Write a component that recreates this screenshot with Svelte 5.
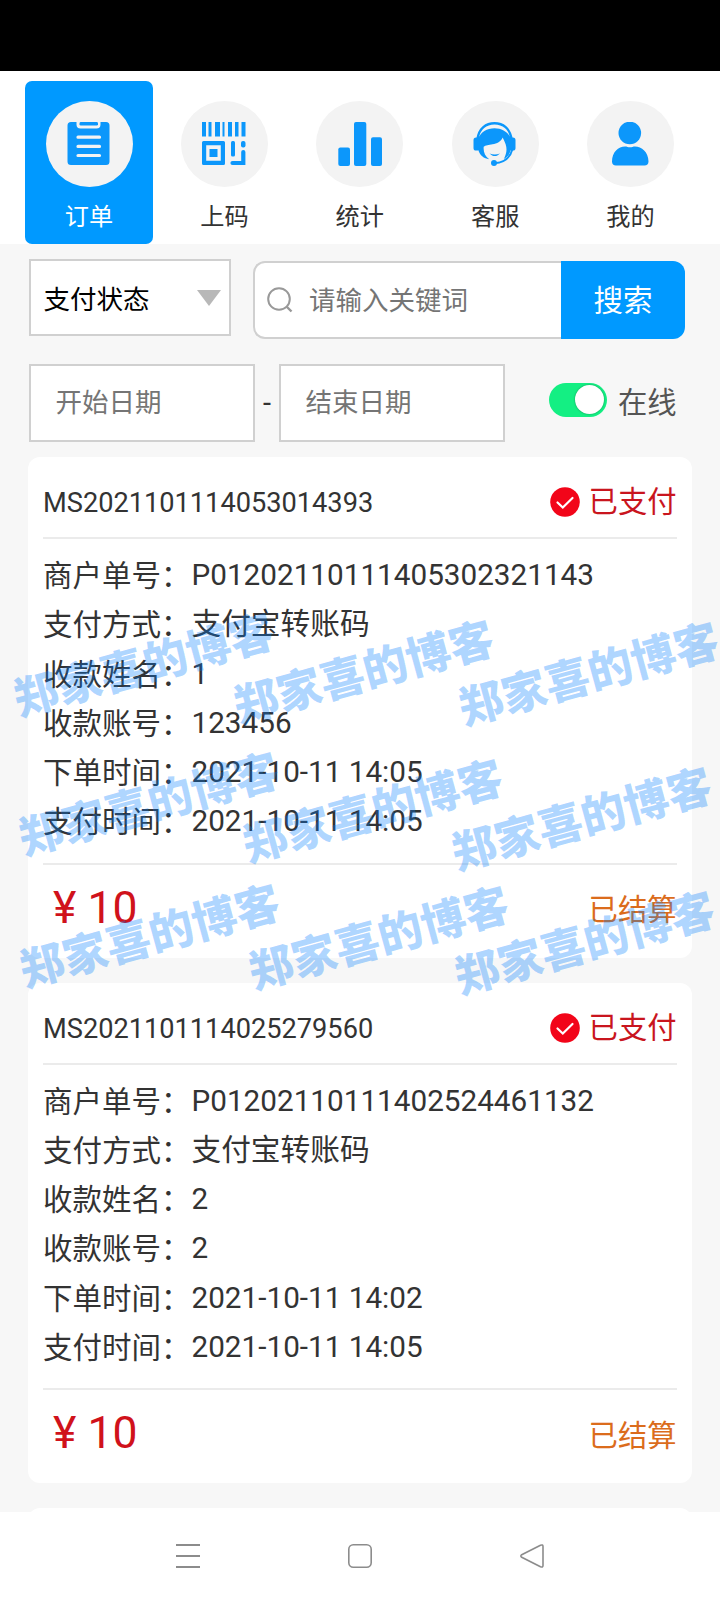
<script lang="ts">
	interface Order {
		id: string;
		rows: [string, string][];
		amount: number;
	}

	const tabs = [
		{ icon: 'order', label: '订单' },
		{ icon: 'code', label: '上码' },
		{ icon: 'stats', label: '统计' },
		{ icon: 'service', label: '客服' },
		{ icon: 'mine', label: '我的' }
	];

	const orders: Order[] = [
		{
			id: 'MS2021101114053014393',
			rows: [
				['商户单号', 'P01202110111405302321143'],
				['支付方式', '支付宝转账码'],
				['收款姓名', '1'],
				['收款账号', '123456'],
				['下单时间', '2021-10-11 14:05'],
				['支付时间', '2021-10-11 14:05']
			],
			amount: 10
		},
		{
			id: 'MS2021101114025279560',
			rows: [
				['商户单号', 'P01202110111402524461132'],
				['支付方式', '支付宝转账码'],
				['收款姓名', '2'],
				['收款账号', '2'],
				['下单时间', '2021-10-11 14:02'],
				['支付时间', '2021-10-11 14:05']
			],
			amount: 10
		}
	];

	// centre points of the watermark stamps
	const marks = [
		[143, 663], [363, 670], [588, 672],
		[148, 802], [372, 809], [581, 817],
		[149, 934], [378, 936], [584, 941]
	];

	let active = $state('order');
	let online = $state(true);
</script>

<div class="app">
	<div class="status-bar"></div>

	<nav class="tabs">
		{#each tabs as tab}
			<button class="tab" class:active={active === tab.icon} onclick={() => (active = tab.icon)}>
				<span class="tab-icon">
					<svg viewBox="0 0 44 44" width="44" height="44" fill="#0c97fb">
						{#if tab.icon === 'order'}
							<path d="M4 0h5.500v2.500a4 4 0 0 0 4 4h16a4 4 0 0 0 4-4V0h5.500a3.500 3.500 0 0 1 3.500 3.500v36a3.500 3.500 0 0 1-3.500 3.500H4a3.500 3.500 0 0 1-3.500-3.500v-36A3.500 3.500 0 0 1 4 0z" />
							<rect x="12.500" y="0" width="18.500" height="3.600" rx="1.400" />
							<path d="M11 15.200h21.500M11 24.400h21.500M11 33.500h21.500" stroke="#f3f3f3" stroke-width="3.200" stroke-linecap="round" />
						{:else if tab.icon === 'code'}
							<path d="M0 0h4v14.500H0zM6.500 0h3v14.500h-3zM13 0h5v14.500h-5zM20.500 0h2v14.500h-2zM26 0h4v14.500h-4zM33 0h3.500v14.500H33zM39.500 0h4v14.500h-4z" />
							<path fill-rule="evenodd" d="M1.500 19h20a1.500 1.500 0 0 1 1.500 1.500v21a1.500 1.500 0 0 1-1.500 1.500h-20A1.500 1.500 0 0 1 0 41.500v-21A1.500 1.500 0 0 1 1.500 19zM4.200 23.200v15.600h14.600V23.200z" />
							<rect x="7.500" y="27" width="8" height="8" />
							<rect x="29" y="19" width="4" height="15.500" rx="1.500" />
							<rect x="39" y="19" width="4.500" height="6.500" rx="2" />
							<path d="M41.300 30v11H30.500" fill="none" stroke="#0c97fb" stroke-width="4.200" stroke-linecap="round" />
						{:else if tab.icon === 'stats'}
							<rect x="0.300" y="25.500" width="11.700" height="18.500" rx="2" />
							<rect x="16" y="0" width="12.300" height="44" rx="2" />
							<rect x="33" y="15.300" width="11" height="28.700" rx="2" />
						{:else if tab.icon === 'service'}
							<path d="M4.500 17C6 6.500 13 1.300 21.500 1.300S37 6.500 38.500 17" fill="none" stroke="#0c97fb" stroke-width="2.400" />
							<path d="M5 17C7.500 10 14 6.200 21.500 6.200S35.500 10 38 17v10c-1.200 5-3.400 7.800-7.200 10 2.800-5.500 3.400-9.500 1.900-14.500-.7-2.600-2-4.500-3-7-1.800 4.200-5.700 6.200-10.200 6.800-3.800.6-7 .9-8.800 2.500-.5 5 1.200 9.200 5.500 12.400C11 36.500 6.600 33.500 5 27z" />
							<rect x="0.500" y="15.500" width="6" height="13" rx="2.600" />
							<rect x="36.500" y="15.500" width="6" height="13" rx="2.600" />
							<path d="M16.500 31.500c3.500 3.400 7 3.400 10.500 0-3.500 1.400-7 1.400-10.500 0z" />
							<path d="M39.500 27C37 36.500 31 40.500 21.500 41.200" fill="none" stroke="#0c97fb" stroke-width="2" />
							<circle cx="21" cy="41" r="3" />
						{:else}
							<circle cx="20.800" cy="11" r="11.300" />
							<path d="M3 39.500C3 30 9.500 24.500 16 24.500c2 0 3 .8 5 .8s3-.8 5-.8c6.500 0 13.500 5.500 13.500 15 0 2.500-1.500 4-4 4H7c-2.500 0-4-1.500-4-4z" />
						{/if}
					</svg>
				</span>
				<span class="tab-label">{tab.label}</span>
			</button>
		{/each}
	</nav>

	<div class="filters">
		<div class="select">
			<span>支付状态</span>
			<svg width="24" height="16" viewBox="0 0 24 16"><path d="M0 0h24L12 16z" fill="#b8b8b8" /></svg>
		</div>
		<div class="search">
			<div class="search-input">
				<svg width="26" height="26" viewBox="0 0 26 26" fill="none" stroke="#999" stroke-width="2">
					<circle cx="12" cy="12" r="10.800" />
					<path d="M19.500 19.500l5 5" stroke-width="2.400" />
				</svg>
				<span>请输入关键词</span>
			</div>
			<button class="search-btn">搜索</button>
		</div>
	</div>

	<div class="dates">
		<div class="date">开始日期</div>
		<span class="dash">-</span>
		<div class="date">结束日期</div>
		<button class="switch" class:on={online} aria-label="在线" onclick={() => (online = !online)}>
			<span class="knob"></span>
		</button>
		<span class="online">在线</span>
	</div>

	<main class="list">
		{#each orders as order}
			<section class="card">
				<header class="card-head">
					<span class="order-id">{order.id}</span>
					<span class="paid">
						<svg width="30" height="30" viewBox="0 0 30 30">
							<circle cx="15" cy="15" r="14.800" fill="#f20519" />
							<path d="M7.500 15.500l5.300 5L22.500 11" fill="none" stroke="#fff" stroke-width="2.200" stroke-linecap="round" />
						</svg>
						<span class="paid-text">已支付</span>
					</span>
				</header>
				<div class="card-body">
					{#each order.rows as [name, value]}
						<div class="row"><span class="name">{name}：</span><span class="value">{value}</span></div>
					{/each}
				</div>
				<footer class="card-foot">
					<span class="amount">¥ {order.amount}</span>
					<span class="settled">已结算</span>
				</footer>
			</section>
		{/each}
		<section class="card"></section>
	</main>

	<div class="sys-nav">
		<svg width="24" height="24" viewBox="0 0 24 24" stroke="#8c8c8c" stroke-width="2"><path d="M0 1h24M0 12h24M0 23h24" /></svg>
		<svg width="24" height="24" viewBox="0 0 24 24" fill="none" stroke="#8c8c8c" stroke-width="1.600"><rect x="0.800" y="0.800" width="22.400" height="22.400" rx="4.500" /></svg>
		<svg width="24" height="24" viewBox="0 0 24 24" fill="none" stroke="#8c8c8c" stroke-width="1.600" stroke-linejoin="round"><path d="M1.700 10.700L20.500 1.200Q23 .3 23 2.500v19Q23 23.700 20.500 22.800L1.700 13.300Q0 12 1.700 10.700z" /></svg>
	</div>

	<div class="watermarks">
		{#each marks as [x, y]}
			<span style="left: {x}px; top: {y}px">郑家喜的博客</span>
		{/each}
	</div>
</div>

<style>
	:global(body) {
		background: #f7f7f7;
	}

	.app {
		position: relative;
		display: flex;
		flex-direction: column;
		width: 720px;
		height: 1600px;
		overflow: hidden;
		box-sizing: border-box;
		background: #f7f7f7;
		color: #333;
		font-family: Roboto, 'Noto Sans CJK SC', sans-serif;
		white-space: nowrap;
	}

	.app :global(*) {
		box-sizing: border-box;
	}

	svg {
		display: block;
		flex: none;
	}

	button {
		border: none;
		padding: 0;
		margin: 0;
		background: none;
		font-family: inherit;
		color: inherit;
	}

	.status-bar {
		flex: none;
		height: 71px;
		background: #000;
	}

	.tabs {
		flex: none;
		display: grid;
		grid-template-columns: repeat(5, 128px);
		column-gap: 7.400px;
		height: 173px;
		padding: 10px 0 0 25px;
		background: #fff;
	}

	.tab {
		display: flex;
		flex-direction: column;
		align-items: center;
		height: 163px;
		padding-top: 20px;
		border-radius: 7px;
	}

	.tab.active {
		background: #0099ff;
		color: #fff;
	}

	.tab-icon {
		display: flex;
		align-items: center;
		justify-content: center;
		width: 87px;
		height: 86px;
		border-radius: 50%;
		background: #f3f3f3;
	}

	.tab-label {
		margin-top: 14px;
		font-size: 24.200px;
		line-height: 32px;
	}

	.filters {
		flex: none;
		display: flex;
		align-items: flex-start;
		gap: 22px;
		padding: 15px 0 0 29px;
	}

	.select {
		display: flex;
		align-items: center;
		justify-content: space-between;
		width: 202px;
		height: 77px;
		padding: 0 8px 0 12.500px;
		border: 2px solid #d0d0d0;
		background: #fff;
		color: #000;
		font-size: 26.500px;
	}

	.search {
		display: flex;
		margin-top: 2px;
		width: 432px;
		height: 78px;
	}

	.search-input {
		flex: 1;
		display: flex;
		align-items: center;
		gap: 16px;
		padding-left: 12px;
		border: 2px solid #d0d0d0;
		border-right: none;
		border-radius: 12px 0 0 12px;
		background: #fff;
		color: #757575;
		font-size: 26.500px;
	}

	.search-input span {
		padding-bottom: 3px;
	}

	.search-btn {
		width: 124px;
		padding-bottom: 4px;
		border-radius: 0 12px 12px 0;
		background: #0099ff;
		color: #fff;
		font-size: 29.500px;
	}

	.dates {
		flex: none;
		display: flex;
		align-items: center;
		height: 78px;
		margin-top: 25px;
		padding-left: 29px;
	}

	.date {
		width: 226px;
		height: 78px;
		padding-left: 24.500px;
		border: 2px solid #d0d0d0;
		background: #fff;
		color: #757575;
		font-size: 26.500px;
		line-height: 74px;
	}

	.dash {
		width: 24px;
		text-align: center;
		font-size: 29px;
	}

	.switch {
		display: flex;
		align-items: center;
		width: 58px;
		height: 34px;
		margin: -7px 11px 0 44px;
		padding: 0 3px;
		border-radius: 18px;
		background: #ccc;
	}

	.switch.on {
		justify-content: flex-end;
		background: #14ef83;
	}

	.knob {
		width: 29px;
		height: 29px;
		border-radius: 50%;
		background: #fff;
		box-shadow: 0 0 2px rgba(0, 0, 0, 0.4);
	}

	.online {
		padding-bottom: 7px;
		color: #555;
		font-size: 29.300px;
	}

	.list {
		flex: 1;
		display: flex;
		flex-direction: column;
		gap: 25px;
		min-height: 0;
		overflow: hidden;
		padding: 15px 28px 0;
	}

	.card {
		flex: none;
		height: 500.500px;
		width: 663.500px;
		padding: 0 15px;
		border-radius: 12px;
		background: #fff;
	}

	.card-head {
		display: flex;
		align-items: center;
		justify-content: space-between;
		height: 82px;
		padding-top: 10px;
		border-bottom: 2px solid #ebebeb;
	}

	.order-id {
		padding-top: 2px;
		font-size: 27.200px;
	}

	.paid {
		display: flex;
		align-items: center;
		gap: 9px;
		color: #c9151e;
		font-size: 29.300px;
	}

	.paid-text {
		padding-bottom: 6px;
	}

	.card-body {
		height: 323.500px;
		padding-top: 13px;
		font-size: 29.700px;
	}

	.row {
		display: flex;
		height: 49.250px;
		line-height: 49.250px;
	}

	.name {
		width: 148.500px;
		font-size: 29.500px;
	}

	.value {
		line-height: 46.500px;
	}

	.card-foot {
		display: flex;
		align-items: center;
		justify-content: space-between;
		height: 87px;
		padding-left: 10px;
		border-top: 2px solid #ebebeb;
	}

	.amount {
		padding-top: 1px;
		color: #d0121b;
		font-size: 44.500px;
	}

	.settled {
		color: #db6c1c;
		font-size: 29.300px;
	}

	.sys-nav {
		flex: none;
		display: flex;
		justify-content: center;
		gap: 148px;
		height: 88px;
		padding-top: 32px;
		background: #fff;
	}

	.watermarks {
		position: absolute;
		inset: 0;
		pointer-events: none;
	}

	.watermarks span {
		position: absolute;
		transform: translate(-50%, -50%) rotate(-15.300deg);
		color: rgba(0, 125, 255, 0.31);
		font-family: 'Noto Sans CJK SC', sans-serif;
		font-size: 44.600px;
		font-weight: 900;
		line-height: 1;
	}
</style>
